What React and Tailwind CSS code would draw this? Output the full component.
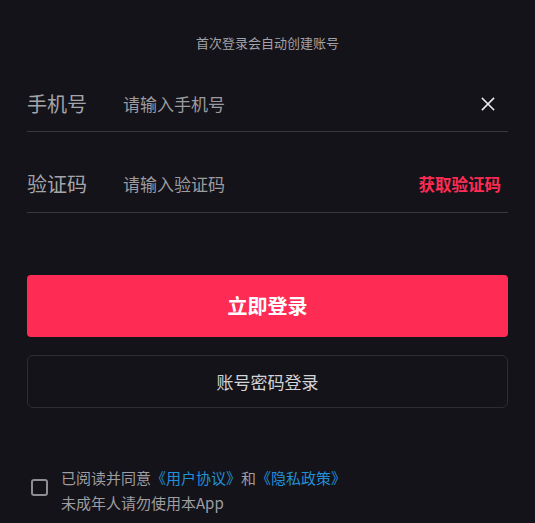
import React, { useState } from 'react';

const font = { fontFamily: '"Noto Sans CJK SC", "Noto Sans", sans-serif' };

export default function App() {
  const [agreed, setAgreed] = useState(false);

  return (
    <div className="w-[535px] h-[523px] overflow-hidden bg-[#141319] px-[27px] pt-[33px]" style={font}>
      {/* hint */}
      <p className="h-[20px] text-center text-[13px] leading-[20px] text-[#a3a2a7]">首次登录会自动创建账号</p>

      {/* phone */}
      <div className="h-[79px] pt-[23px] border-b border-[#3a3940]">
        <div className="flex h-full items-center">
          <span className="w-[96px] text-[20px] text-[#a5a4a9]">手机号</span>
          <input
            type="text"
            placeholder="请输入手机号"
            className="flex-1 bg-transparent text-[17px] text-white placeholder:text-[#9c9ba0] outline-none"
          />
          <button className="mr-[13px] flex h-[14px] w-[14px] items-center justify-center text-[#ececec]">
            <svg width="14" height="14" viewBox="0 0 14 14" fill="none" stroke="currentColor" strokeWidth="1.6" strokeLinecap="square">
              <path d="M1.5 1.5 L12.5 12.5 M12.5 1.5 L1.5 12.5" />
            </svg>
          </button>
        </div>
      </div>

      {/* code */}
      <div className="h-[81px] pt-[24px] border-b border-[#3a3940]">
        <div className="flex h-full items-center">
          <span className="w-[96px] text-[20px] text-[#a5a4a9]">验证码</span>
          <input
            type="text"
            placeholder="请输入验证码"
            className="flex-1 bg-transparent text-[17px] text-white placeholder:text-[#9c9ba0] outline-none"
          />
          <button className="mr-[7px] text-[16.5px] font-bold text-[#fe2c55]">获取验证码</button>
        </div>
      </div>

      <button className="mt-[62px] flex h-[62px] w-full items-center justify-center rounded-[4px] bg-[#fe2c55] text-[20px] font-bold text-white">
        立即登录
      </button>

      <button className="mt-[18px] flex h-[53px] w-full items-center justify-center rounded-[6px] border border-[#2e2d34] text-[17px] text-[#d4d3d7]">
        账号密码登录
      </button>

      {/* agreement */}
      <div className="mt-[57px] flex items-center">
        <button
          onClick={() => setAgreed(!agreed)}
          className="ml-[4px] mt-[-5px] h-[17px] w-[17px] shrink-0 rounded-[3px] border-2 border-[#8e8d92]"
        />
        <div className="ml-[13px] text-[15px] leading-[25px] text-[#9e9da2]">
          <p>
            已阅读并同意<span className="text-[#238fd6]">《用户协议》</span>和<span className="text-[#238fd6]">《隐私政策》</span>
          </p>
          <p>未成年人请勿使用本App</p>
        </div>
      </div>
    </div>
  );
}
